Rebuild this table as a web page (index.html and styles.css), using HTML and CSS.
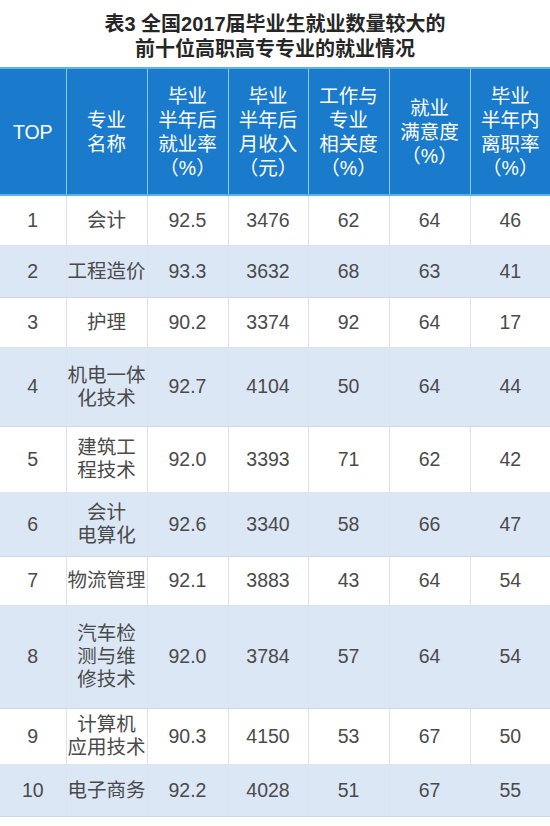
FILE: index.html
```html
<!DOCTYPE html>
<html lang="zh-CN">
<head>
<meta charset="utf-8">
<title>表3</title>
<link rel="stylesheet" href="styles.css">
</head>
<body>
<h1 class="title">表3 全国2017届毕业生就业数量较大的<br>前十位高职高专专业的就业情况</h1>
<table class="grid">
  <colgroup>
    <col class="c-top"><col class="c-name"><col class="c-n"><col class="c-m"><col class="c-n"><col class="c-n"><col class="c-m">
  </colgroup>
  <thead>
    <tr class="head">
      <th>TOP</th>
      <th>专业<br>名称</th>
      <th>毕业<br>半年后<br>就业率<br>（%）</th>
      <th>毕业<br>半年后<br>月收入<br>（元）</th>
      <th>工作与<br>专业<br>相关度<br>（%）</th>
      <th>就业<br>满意度<br>（%）</th>
      <th>毕业<br>半年内<br>离职率<br>（%）</th>
    </tr>
  </thead>
  <tbody>
    <tr class="r50"><td>1</td><td>会计</td><td>92.5</td><td>3476</td><td>62</td><td>64</td><td>46</td></tr>
    <tr class="r52 alt"><td>2</td><td>工程造价</td><td>93.3</td><td>3632</td><td>68</td><td>63</td><td>41</td></tr>
    <tr class="r50"><td>3</td><td>护理</td><td>90.2</td><td>3374</td><td>92</td><td>64</td><td>17</td></tr>
    <tr class="r79 alt"><td>4</td><td>机电一体<br>化技术</td><td>92.7</td><td>4104</td><td>50</td><td>64</td><td>44</td></tr>
    <tr class="r66"><td>5</td><td>建筑工<br>程技术</td><td>92.0</td><td>3393</td><td>71</td><td>62</td><td>42</td></tr>
    <tr class="r64 alt"><td>6</td><td>会计<br>电算化</td><td>92.6</td><td>3340</td><td>58</td><td>66</td><td>47</td></tr>
    <tr class="r49"><td>7</td><td>物流管理</td><td>92.1</td><td>3883</td><td>43</td><td>64</td><td>54</td></tr>
    <tr class="r103 alt"><td>8</td><td>汽车检<br>测与维<br>修技术</td><td>92.0</td><td>3784</td><td>57</td><td>64</td><td>54</td></tr>
    <tr class="r56"><td>9</td><td>计算机<br>应用技术</td><td>90.3</td><td>4150</td><td>53</td><td>67</td><td>50</td></tr>
    <tr class="r52 alt"><td>10</td><td>电子商务</td><td>92.2</td><td>4028</td><td>51</td><td>67</td><td>55</td></tr>
  </tbody>
</table>
</body>
</html>
```
FILE: styles.css
```css
html, body {
  margin: 0;
  padding: 0;
  background: #ffffff;
}
body {
  width: 550px;
  font-family: "Liberation Sans", "Noto Sans CJK SC", Arial, sans-serif;
}
.title {
  margin: 0;
  padding: 12px 0 5px;
  height: 50px;
  font-size: 20px;
  line-height: 25px;
  font-weight: bold;
  color: #262626;
  text-align: center;
}
.grid {
  width: 550px;
  border-collapse: collapse;
  table-layout: fixed;
}
.c-top { width: 66px; }
.c-name { width: 81px; }
.c-n { width: 81px; }
.c-m { width: 80px; }
.grid th,
.grid td {
  padding: 0;
  text-align: center;
  vertical-align: middle;
  font-weight: normal;
}
.head {
  height: 127px;
}
.grid th {
  background: #1a7acb;
  color: #ffffff;
  font-size: 19.5px;
  line-height: 24px;
  border: 1px solid #8ccbf0;
  border-top: 2px solid #5cb4e6;
  border-bottom: 2px solid #5cb4e6;
}
.grid th:first-child { border-left: none; }
.grid th:last-child { border-right: none; }
.grid td {
  color: #4a4a4a;
  font-size: 19.5px;
  line-height: 23px;
  border: 1px solid #dde3eb;
  background: #ffffff;
}
.grid td:first-child { border-left: none; }
.grid td:last-child { border-right: none; }
.grid tr.alt td {
  background: #dce7f6;
  border-top-color: #cbd8e8;
  border-bottom-color: #cbd8e8;
}
.r49 { height: 49px; }
.r50 { height: 50px; }
.r52 { height: 52px; }
.r56 { height: 56px; }
.r64 { height: 64px; }
.r66 { height: 66px; }
.r79 { height: 79px; }
.r103 { height: 103px; }
```
